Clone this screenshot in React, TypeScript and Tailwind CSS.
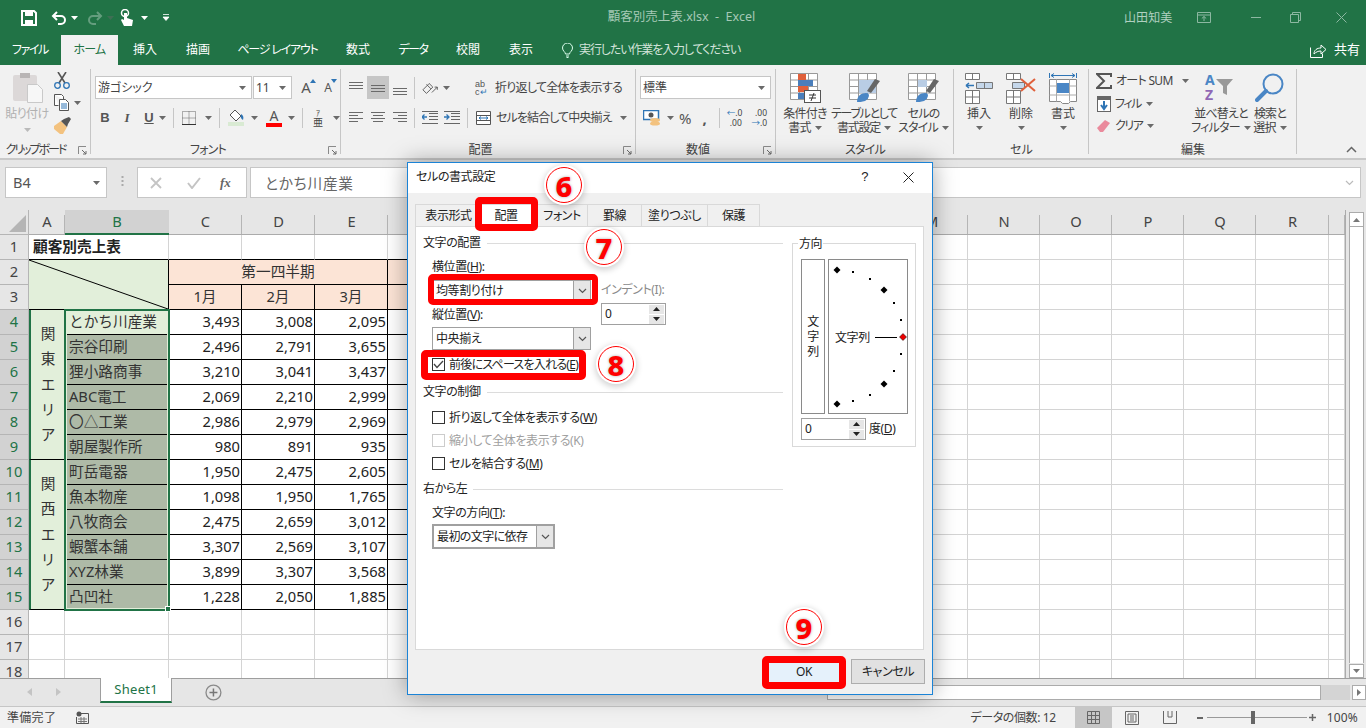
import type { ReactNode } from "react";

// カーソル類の小さい三角
function Caret({ className = "" }: { className?: string }) {
  return (
    <svg width="7" height="4" viewBox="0 0 7 4" className={className}>
      <path d="M0 0h7L3.500 4z" fill="#6a6a6a" />
    </svg>
  );
}

function Launcher() {
  return (
    <svg width="9" height="9" viewBox="0 0 9 9">
      <path d="M.5 8V.5H8" fill="none" stroke="#8a8a8a" />
      <path d="M4 4l4 4M8 5v3H5" fill="none" stroke="#6a6a6a" />
    </svg>
  );
}

function Chevron({ className = "", color = "#555" }: { className?: string; color?: string }) {
  return (
    <svg width="9" height="6" viewBox="0 0 9 6" className={className}>
      <path d="M1 1l3.500 3.500L8 1" fill="none" stroke={color} strokeWidth="1.200" />
    </svg>
  );
}

function Sep({ className = "h-[20px]" }: { className?: string }) {
  return <div className={`w-px bg-[#c6c6c6] ${className}`} />;
}

function Group({
  width,
  label,
  labelClass = "",
  launcher,
  children,
}: {
  width: string;
  label: string;
  labelClass?: string;
  launcher?: boolean;
  children: ReactNode;
}) {
  return (
    <div className={`relative flex flex-col shrink-0 ${width}`}>
      <div className="h-[77px] overflow-hidden">{children}</div>
      <div className={`flex h-[16px] items-center justify-center whitespace-nowrap text-[12px] leading-none text-[#444] ${labelClass}`}>
        {label}
      </div>
      {launcher && (
        <div className="absolute bottom-[3px] right-[4px]">
          <Launcher />
        </div>
      )}
      <div className="absolute right-0 top-[4px] h-[85px] w-px bg-[#c6c6c6]" />
    </div>
  );
}

function AlignIcon({ lines, x }: { lines: number[]; x?: number[][] }) {
  return (
    <svg width="16" height="16" viewBox="0 0 16 16">
      {lines.map((y, i) => (
        <path
          key={i}
          d={`M${x ? x[i][0] : 1} ${y + 0.5}H${x ? x[i][1] : 15}`}
          stroke="#6a6a6a"
          strokeWidth="1"
        />
      ))}
    </svg>
  );
}

function BigButton({
  icon,
  line1,
  line2,
  width,
  caret2,
}: {
  icon: ReactNode;
  line1: string;
  line2?: string;
  width: string;
  caret2?: boolean;
}) {
  return (
    <div className={`flex flex-col items-center ${width}`}>
      <div className="flex h-[33px] items-start justify-center">{icon}</div>
      <div className="mt-px h-[14px] whitespace-nowrap text-[12px] leading-[14px] text-[#444]">{line1}</div>
      <div className="flex h-[14px] items-center gap-[4px] whitespace-nowrap text-[12px] leading-[14px] text-[#444]">
        {line2}
        {caret2 && <Caret />}
      </div>
    </div>
  );
}

function ClipboardGroup() {
  return (
    <div className="flex h-full">
      <div className="flex w-[54px] flex-col items-center pt-[8px]">
        <svg width="30" height="30" viewBox="0 0 30 30" className="ml-[2px]">
          <rect x="0" y="2" width="24" height="26" rx="2" fill="#dcd8d8" />
          <rect x="7" y="0" width="10" height="5" fill="#b9b5b5" />
          <path d="M14.500 11.500h10l5 5v13h-15z" fill="#f7f7f7" stroke="#c9c9c9" />
        </svg>
        <div className="mt-[4px] text-[12px] leading-[14px] tracking-[-0.5px] text-[#b0b0b0]">貼り付け</div>
        <Caret className="mt-[7px] opacity-40" />
      </div>
      <div className="flex flex-col pt-[7px]">
        <svg width="16" height="18" viewBox="0 0 16 18">
          <path d="M4 0l7 11M12 0L5 11" stroke="#555" strokeWidth="1.600" fill="none" />
          <circle cx="3.500" cy="13.500" r="2.800" fill="none" stroke="#2f75b5" strokeWidth="1.300" />
          <circle cx="12.500" cy="13.500" r="2.800" fill="none" stroke="#2f75b5" strokeWidth="1.300" />
        </svg>
        <div className="mt-[4px] flex items-center gap-[4px]">
          <svg width="16" height="17" viewBox="0 0 16 17">
            <path d="M.5.5h7l2 2v3M.5.5v11h4" fill="#fff" stroke="#555" />
            <path d="M5.500 5.500h6l3 3v8h-9z" fill="#fff" stroke="#555" />
            <path d="M7 10h6M7 12h6M7 14h6" stroke="#2f75b5" />
          </svg>
          <Caret />
        </div>
        <svg width="17" height="17" viewBox="0 0 17 17" className="mt-[6px]">
          <path d="M0 9l7-5 6 6-4 7H6L0 12z" fill="#f3c27f" />
          <path d="M7 4l3-2 5-2 2 2-3 5-1 3z" fill="#555" />
        </svg>
      </div>
    </div>
  );
}

function FontGroup() {
  return (
    <div className="pt-[11px] pl-[4px]">
      <div className="flex h-[23px] items-center">
        <div className="flex h-[23px] w-[157px] items-center justify-between border border-[#c6c6c6] bg-white pl-[2px] pr-[5px] text-[12px] text-[#444]">
          游ゴシック
          <Caret />
        </div>
        <div className="ml-px flex h-[23px] w-[39px] items-center justify-between border border-[#c6c6c6] bg-white pl-[2px] pr-[5px] text-[12px] text-[#444]">
          11
          <Caret />
        </div>
        <div className="relative ml-[5px] w-[18px] text-center text-[15px] leading-none text-[#555]">
          A
          <svg width="6" height="4" viewBox="0 0 6 4" className="absolute right-[-1px] top-[-1px]">
            <path d="M0 4h6L3 0z" fill="#2f75b5" />
          </svg>
        </div>
        <div className="relative ml-[5px] w-[16px] text-center text-[12px] leading-none text-[#555]">
          A
          <svg width="6" height="4" viewBox="0 0 6 4" className="absolute right-[-1px] top-[-3px]">
            <path d="M0 0h6L3 4z" fill="#2f75b5" />
          </svg>
        </div>
      </div>
      <div className="mt-[9px] flex h-[20px] items-center text-[#555]">
        <div className="w-[14px] ml-[3px] text-center text-[13px] font-bold font-['Liberation_Sans']">B</div>
        <div className="ml-[8px] w-[14px] text-center text-[13px] italic font-bold font-['Liberation_Serif']">I</div>
        <div className="ml-[8px] w-[14px] text-center text-[13px] font-bold underline font-['Liberation_Sans']">U</div>
        <Caret className="ml-[3px]" />
        <Sep className="ml-[7px] h-[20px]" />
        <svg width="14" height="14" viewBox="0 0 14 14" className="ml-[8px]">
          <path d="M.5.5h13v13H.5z M7 .5v13 M.5 7h13" fill="none" stroke="#666" strokeDasharray="1 1" />
          <path d="M0 13.500h14" stroke="#333" />
        </svg>
        <Caret className="ml-[9px]" />
        <Sep className="ml-[7px] h-[20px]" />
        <div className="ml-[7px] flex w-[18px] flex-col items-center">
          <svg width="16" height="12" viewBox="0 0 16 12">
            <path d="M7 0l6 6-5 5-6-6z" fill="#fff" stroke="#555" />
            <path d="M13 4c2 1 3 3 2 6-2-1-3-3-2-6z" fill="#2f75b5" />
          </svg>
          <div className="h-[4px] w-[16px] bg-[#d9ead3]" />
        </div>
        <Caret className="ml-[6px]" />
        <div className="ml-[8px] flex w-[16px] flex-col items-center">
          <span className="text-[14px] leading-[13px] text-[#555]">A</span>
          <div className="mt-[1px] h-[4px] w-[16px] bg-[#f00]" />
        </div>
        <Caret className="ml-[6px]" />
        <Sep className="ml-[7px] h-[20px]" />
        <div className="ml-[9px] flex w-[12px] flex-col items-center text-[#444]">
          <span className="text-[8px] leading-[8px]">ｱ</span>
          <span className="text-[10px] leading-[11px]">亜</span>
        </div>
        <Caret className="ml-[9px]" />
      </div>
    </div>
  );
}

function AlignmentGroup() {
  return (
    <div className="pt-[11px] pl-[3px]">
      <div className="flex h-[23px] items-center">
        <div className="flex w-[23px] justify-center">
          <AlignIcon lines={[2, 5, 8]} />
        </div>
        <div className="flex h-[23px] w-[22px] items-center justify-center bg-[#c6c6c6]">
          <AlignIcon lines={[5, 8, 11]} />
        </div>
        <div className="flex w-[22px] justify-center">
          <AlignIcon lines={[8, 11, 14]} />
        </div>
        <Sep className="ml-[3px] h-[22px]" />
        <svg width="18" height="16" viewBox="0 0 20 16" className="ml-[7px]">
          <path d="M1 10l7-7 4 4-7 7zM5 4l5 5" fill="none" stroke="#555" />
          <path d="M11 13l6-6" stroke="#555" />
          <path d="M14 7h3v3" fill="none" stroke="#555" />
        </svg>
        <Caret className="ml-[3px]" />
        <Sep className="ml-[12px] h-[0px]" />
        <div className="ml-[12px] flex items-center">
          <div className="flex w-[20px] flex-col text-[9px] font-['Liberation_Sans'] leading-[8px] text-[#555]">
            <span>ab</span>
            <span>c<span className="text-[#2f75b5]">↵</span></span>
          </div>
          <span className="whitespace-nowrap text-[12px] tracking-[-0.7px] text-[#444]">折り返して全体を表示する</span>
        </div>
      </div>
      <div className="mt-[8px] flex h-[21px] items-center">
        <div className="flex w-[23px] justify-center">
          <AlignIcon lines={[2, 5, 8, 11]} x={[[1, 15], [1, 10], [1, 15], [1, 10]]} />
        </div>
        <div className="flex w-[22px] justify-center">
          <AlignIcon lines={[2, 5, 8, 11]} x={[[1, 15], [3, 13], [1, 15], [3, 13]]} />
        </div>
        <div className="flex w-[22px] justify-center">
          <AlignIcon lines={[2, 5, 8, 11]} x={[[1, 15], [6, 15], [1, 15], [6, 15]]} />
        </div>
        <Sep className="ml-[3px] h-[20px]" />
        <svg width="16" height="14" viewBox="0 0 16 14" className="ml-[7px]">
          <path d="M7 2.500h9M7 5.500h9M7 8.500h9M0 .5h16M0 12.500h16" stroke="#666" />
          <path d="M5 6H0M2.500 3.500L0 6l2.500 2.500" fill="none" stroke="#2f75b5" strokeWidth="1.300" />
        </svg>
        <svg width="16" height="14" viewBox="0 0 16 14" className="ml-[6px]">
          <path d="M7 2.500h9M7 5.500h9M7 8.500h9M0 .5h16M0 12.500h16" stroke="#666" />
          <path d="M0 6h5M2.500 3.500L5 6 2.500 8.500" fill="none" stroke="#2f75b5" strokeWidth="1.300" />
        </svg>
        <Sep className="ml-[7px] h-[20px]" />
        <svg width="15" height="14" viewBox="0 0 15 14" className="ml-[8px]">
          <path d="M.5.5h14v13H.5zM.5 4.500h14M.5 9.500h14" fill="#fff" stroke="#555" />
          <path d="M3 7h9M3 7l2-1.500M3 7l2 1.500M12 7l-2-1.500M12 7l-2 1.500" fill="none" stroke="#2f75b5" />
        </svg>
        <span className="ml-[5px] whitespace-nowrap text-[12px] tracking-[-0.9px] text-[#444]">セルを結合して中央揃え</span>
        <Caret className="ml-[8px]" />
      </div>
    </div>
  );
}

function NumberGroup() {
  return (
    <div className="pt-[11px] pl-[4px]">
      <div className="flex h-[23px] w-[131px] items-center justify-between border border-[#c6c6c6] bg-white pl-[2px] pr-[5px] text-[12px] text-[#444]">
        標準
        <Caret />
      </div>
      <div className="mt-[9px] flex h-[20px] items-center">
        <svg width="18" height="16" viewBox="0 0 18 16" className="ml-[3px]">
          <rect x=".5" y=".5" width="15" height="9" fill="#fff" stroke="#2f75b5" strokeWidth="1.500" />
          <circle cx="8" cy="5" r="2.500" fill="#555" />
          <ellipse cx="12" cy="10" rx="5" ry="2" fill="#f3c27f" />
          <ellipse cx="12" cy="13.500" rx="5" ry="2" fill="#f3c27f" />
        </svg>
        <Caret className="ml-[6px]" />
        <span className="ml-[5px] text-[15px] leading-none text-[#555]">%</span>
        <span className="ml-[11px] text-[15px] font-bold leading-none text-[#555]">,</span>
        <Sep className="ml-[12px] h-[20px]" />
        <div className="ml-[7px] flex flex-col gap-[2px] text-[8.500px] leading-[8px] text-[#444]">
          <span><span className="text-[#2f75b5]">←</span>.0</span>
          <span className="pl-[3px]">.00</span>
        </div>
        <div className="ml-[9px] flex flex-col gap-[2px] text-right text-[8.500px] leading-[8px] text-[#444]">
          <span>.00</span>
          <span><span className="text-[#2f75b5]">→</span>.0</span>
        </div>
      </div>
    </div>
  );
}

function StyleGroup() {
  const gridPath = "M.5.5h27v26H.5zM.5 7h27M.5 13.500h27M.5 20h27M9.500.5v26M18.500.5v26";
  return (
    <div className="flex pt-[8px]">
      <BigButton
        width="w-[58px] tracking-[-0.8px]"
        line1="条件付き"
        line2="書式"
        caret2
        icon={
          <svg width="31" height="30" viewBox="0 0 31 30">
            <path d={gridPath} fill="#fff" stroke="#999" />
            <rect x="8" y="1" width="8" height="6" fill="#e0603b" />
            <rect x="8" y="7" width="15" height="6" fill="#4a7ebb" />
            <rect x="8" y="13" width="10" height="6" fill="#e0603b" />
            <rect x="8" y="20" width="6" height="6" fill="#4a7ebb" />
            <rect x="14.500" y="17.500" width="16" height="12" fill="#fff" stroke="#555" />
            <path d="M19 22h7M19 25h7M24 20l-3 8" stroke="#333" fill="none" />
          </svg>
        }
      />
      <BigButton
        width="w-[60px] tracking-[-1.300px]"
        line1="テーブルとして"
        line2="書式設定"
        caret2
        icon={
          <svg width="31" height="30" viewBox="0 0 31 30">
            <path d={gridPath} fill="#fff" stroke="#999" />
            <rect x="10" y="7" width="17" height="13" fill="#b9cde5" />
            <path d="M31 8l-9 12-4-2 8-12z" fill="#666" />
            <path d="M8 29c0-6 4-9 9-9s3 6-1 8c-3 1-6 1-8 1z" fill="#4a86c5" />
          </svg>
        }
      />
      <BigButton
        width="w-[59px] tracking-[-0.8px]"
        line1="セルの"
        line2="スタイル"
        caret2
        icon={
          <svg width="31" height="30" viewBox="0 0 31 30">
            <path d={gridPath} fill="#fff" stroke="#999" />
            <rect x="10" y="7" width="9" height="7" fill="#b9cde5" />
            <path d="M31 8l-9 12-4-2 8-12z" fill="#666" />
            <path d="M8 29c0-6 4-9 9-9s3 6-1 8c-3 1-6 1-8 1z" fill="#4a86c5" />
          </svg>
        }
      />
    </div>
  );
}

function CellsGroup() {
  const tri = "M.5.5h14v6H.5zM7.500.5v6";
  const box = "M.5 17.500h14v13H.5zM.5 24h14M7.500 17.500v13";
  return (
    <div className="flex pl-[2px] pt-[8px]">
      <BigButton
        width="w-[46px]"
        line1="挿入"
        line2=""
        caret2
        icon={
          <svg width="28" height="31" viewBox="0 0 28 31">
            <path d={tri} fill="#fff" stroke="#777" />
            <path d={box} fill="#fff" stroke="#777" />
            <path d="M11.500 9.500h16v6h-16zM19.500 9.500v6" fill="#c5d7ea" stroke="#777" />
            <path d="M1 12.500h8M1 12.500l3-2.500M1 12.500L4 15" fill="none" stroke="#2f75b5" strokeWidth="1.500" />
          </svg>
        }
      />
      <BigButton
        width="w-[38px]"
        line1="削除"
        line2=""
        caret2
        icon={
          <svg width="30" height="31" viewBox="0 0 30 31">
            <path d={tri} fill="#fff" stroke="#777" />
            <path d={box} fill="#fff" stroke="#777" />
            <path d="M6.500 9.500h12v6h-12z" fill="#c5d7ea" stroke="#777" />
            <path d="M15 6l14 12M29 6L15 18" stroke="#e0603b" strokeWidth="2" fill="none" />
          </svg>
        }
      />
      <BigButton
        width="w-[46px]"
        line1="書式"
        line2=""
        caret2
        icon={
          <svg width="28" height="31" viewBox="0 0 28 31">
            <path d="M.5 0v5M27.500 0v5M2 2.500h24M2 2.500l3-2M2 2.500l3 2M26 2.500l-3-2M26 2.500l-3 2" fill="none" stroke="#2f75b5" />
            <path d="M.5 6.500h27v22h-6l-2 2h-6l-2-2h-11z" fill="#fff" stroke="#888" />
            <path d="M7.500 6.500v22M20.500 6.500v22M.5 13h27M.5 22h27" stroke="#aaa" />
            <rect x="8" y="10" width="12" height="10" fill="#4a86c5" />
          </svg>
        }
      />
    </div>
  );
}

function EditGroup() {
  return (
    <div className="flex pt-[5px]">
      <div className="flex w-[103px] flex-col pl-[7px] text-[12px] text-[#444]">
        <div className="flex h-[22px] items-center">
          <svg width="16" height="16" viewBox="0 0 16 16" className="shrink-0">
            <path d="M15 4V1H1l7 7-7 7h14v-3" fill="none" stroke="#555" strokeWidth="2" />
          </svg>
          <span className="ml-[4px] whitespace-nowrap tracking-[-0.7px]">オート SUM</span>
          <Caret className="ml-[9px] shrink-0" />
        </div>
        <div className="flex h-[23px] items-center">
          <svg width="15" height="16" viewBox="0 0 15 16" className="ml-px">
            <rect x=".5" y=".5" width="13" height="15" fill="#fff" stroke="#666" />
            <rect x="0" y="0" width="14" height="4" fill="#666" />
            <path d="M7 5v8M4 9l3 4 3-4" fill="none" stroke="#2f75b5" strokeWidth="2" />
          </svg>
          <span className="ml-[3px] tracking-[-1.500px]">フィル</span>
          <Caret className="ml-[5px]" />
        </div>
        <div className="flex h-[22px] items-center">
          <svg width="15" height="14" viewBox="0 0 15 14" className="ml-px">
            <path d="M0 9l8-8 5 3-7 9H3z" fill="#ea8a9c" />
          </svg>
          <span className="ml-[3px] tracking-[-1.500px]">クリア</span>
          <Caret className="ml-[5px]" />
        </div>
      </div>
      <div className="mt-[3px] flex">
        <BigButton
          width="w-[58px] tracking-[-0.8px]"
          line1="並べ替えと"
          line2="フィルター"
          caret2
          icon={
            <div className="relative flex h-[30px] w-[32px]">
              <div className="flex flex-col gap-[1px] text-[14px] font-bold leading-[14px]">
                <span className="text-[#4a86c5]">A</span>
                <span className="text-[#9068b5]">Z</span>
              </div>
              <svg width="18" height="18" viewBox="0 0 18 18" className="ml-[2px] mt-[5px]">
                <path d="M0 1h17l-6 7v9l-4-2V8z" fill="#999" />
              </svg>
            </div>
          }
        />
        <BigButton
          width="w-[32px] ml-[4px] tracking-[-0.8px]"
          line1="検索と"
          line2="選択"
          caret2
          icon={
            <svg width="30" height="30" viewBox="0 0 30 30">
              <circle cx="18" cy="11" r="9.500" fill="none" stroke="#4a86c5" strokeWidth="2" />
              <path d="M11 18L2 27" stroke="#4a86c5" strokeWidth="4" strokeLinecap="round" />
            </svg>
          }
        />
      </div>
    </div>
  );
}

function Ribbon() {
  return (
    <div className="relative flex h-[93px] shrink-0 bg-[#f1f1f1] text-[#444]">
      <Group width="w-[91px]" label="クリップボード" labelClass="pr-[20px] tracking-[-2px]" launcher>
        <ClipboardGroup />
      </Group>
      <Group width="w-[250px]" label="フォント" labelClass="pr-[16px] tracking-[-0.8px]" launcher>
        <FontGroup />
      </Group>
      <Group width="w-[295px]" label="配置" labelClass="pr-[16px]" launcher>
        <AlignmentGroup />
      </Group>
      <Group width="w-[140px]" label="数値" labelClass="pr-[16px]" launcher>
        <NumberGroup />
      </Group>
      <Group width="w-[178px]" label="スタイル" labelClass="tracking-[-0.8px]">
        <StyleGroup />
      </Group>
      <Group width="w-[135px]" label="セル">
        <CellsGroup />
      </Group>
      <Group width="w-[208px]" label="編集">
        <EditGroup />
      </Group>
      <svg width="11" height="7" viewBox="0 0 11 7" className="absolute bottom-[5px] right-[9px]">
        <path d="M1 6l4.500-4.500L10 6" fill="none" stroke="#666" strokeWidth="1.500" />
      </svg>
    </div>
  );
}

function TitleBar() {
  return (
    <div className="flex h-[35px] shrink-0 items-center bg-[#217346] text-white">
      <svg width="16" height="16" viewBox="0 0 16 16" className="ml-[21px]">
        <path d="M1 1h12l2 2v12H1z" fill="none" stroke="#fff" strokeWidth="2" />
        <rect x="4" y="1" width="8" height="5" fill="#fff" />
        <rect x="4" y="10" width="8" height="5" fill="#fff" />
      </svg>
      <svg width="16" height="14" viewBox="0 0 16 14" className="ml-[14px]">
        <path d="M3 5h7a4 4 0 010 8H7M6 1L2 5l4 4" fill="none" stroke="#fff" strokeWidth="2" />
      </svg>
      <Caret className="ml-[4px] brightness-[3]" />
      <svg width="16" height="14" viewBox="0 0 16 14" className="ml-[9px] opacity-30">
        <path d="M13 5H6a4 4 0 000 8h3M10 1l4 4-4 4" fill="none" stroke="#fff" strokeWidth="2" />
      </svg>
      <Caret className="ml-[4px] opacity-40" />
      <svg width="14" height="18" viewBox="0 0 14 18" className="ml-[6px]">
        <circle cx="5" cy="4" r="3.500" fill="none" stroke="#fff" strokeWidth="1.500" />
        <path d="M4 4v7L2 10l-1 1 3 6h8l1-6-6-2V4z" fill="#fff" />
      </svg>
      <Caret className="ml-[7px] brightness-[3]" />
      <svg width="8" height="7" viewBox="0 0 8 7" className="ml-[14px]">
        <path d="M1 .5h6M1 3h6L4 6.500z" fill="#fff" stroke="#fff" strokeWidth=".8" />
      </svg>
      <div className="flex flex-1 justify-center">
        <span className="ml-[69px] whitespace-nowrap text-[12.500px] text-[#a6c9b6]">顧客別売上表.xlsx&nbsp; -&nbsp; Excel</span>
      </div>
      <span className="w-[48px] whitespace-nowrap text-[12px] tracking-[0.1px] text-[#b0d0c0]">山田知美</span>
      <svg width="14" height="11" viewBox="0 0 14 11" className="ml-[25px]">
        <path d="M.5.5h13v10H.5zM.5 3h13M7 9V4.500M4.800 6.500L7 4.500l2.200 2" fill="none" stroke="#8db8a2" />
      </svg>
      <div className="ml-[40px] h-px w-[10px] bg-[#8db8a2]" />
      <svg width="11" height="11" viewBox="0 0 11 11" className="ml-[29px]">
        <path d="M.5 2.500h8v8h-8zM2.500 2.500v-2h8v8h-2" fill="none" stroke="#8db8a2" />
      </svg>
      <svg width="11" height="11" viewBox="0 0 11 11" className="ml-[35px] mr-[19px]">
        <path d="M.5.5l10 10M10.500.5l-10 10" stroke="#8db8a2" />
      </svg>
    </div>
  );
}

function TabBar() {
  const tabs = [
    ["挿入", "w-[54px]"],
    ["描画", "w-[52px]"],
    ["ページ レイアウト", "w-[107px] tracking-[-1.200px]"],
    ["数式", "w-[54px]"],
    ["データ", "w-[56px] tracking-[-1.500px]"],
    ["校閲", "w-[54px]"],
    ["表示", "w-[52px]"],
  ];
  return (
    <div className="flex h-[30px] shrink-0 items-center bg-[#217346] text-[12px] text-white">
      <div className="w-[61px] pl-[12px] tracking-[-1.400px]">ファイル</div>
      <div className="flex h-full w-[57px] items-center justify-center bg-[#f1f1f1] tracking-[-0.8px] text-[#217346]">ホーム</div>
      {tabs.map(([name, w]) => (
        <div key={name} className={`text-center ${w}`}>
          {name}
        </div>
      ))}
      <svg width="11" height="15" viewBox="0 0 11 15" className="ml-[15px]">
        <path d="M3.500 11c0-2-3-3-3-6a5 5 0 0110 0c0 3-3 4-3 6zM4 13h3M4.500 14.500h2" fill="none" stroke="#dfe" />
      </svg>
      <span className="ml-[6px] whitespace-nowrap tracking-[-1.100px] text-[#d3e3da]">実行したい作業を入力してください</span>
      <div className="flex flex-1 items-center justify-end pr-[6px]">
        <svg width="16" height="15" viewBox="0 0 16 15">
          <path d="M.5 4.500v10h12v-4" fill="none" stroke="#fff" />
          <path d="M4 11c0-4 3-6 7-6V2l5 4.500L11 11V8c-3 0-5 1-7 3z" fill="none" stroke="#fff" />
        </svg>
        <span className="ml-[8px] text-[13px]">共有</span>
      </div>
    </div>
  );
}

function FormulaBar() {
  return (
    <div className="flex h-[52px] shrink-0 border-t-2 border-[#c9c9c9] bg-[#e6e6e6] pl-[5px] pr-[5px] pt-[7px]">
      <div className="flex h-[31px] w-[102px] items-center justify-between border border-[#c6c6c6] bg-white pl-[7px] pr-[6px] text-[14.500px] text-[#555]">
        B4
        <Caret />
      </div>
      <div className="flex w-[30px] justify-center pt-[8px]">
        <svg width="3" height="12" viewBox="0 0 3 12">
          <path d="M1.500 1v2M1.500 5v2M1.500 9v2" stroke="#aaa" strokeWidth="2" />
        </svg>
      </div>
      <div className="flex h-[31px] w-[110px] items-center border border-[#c6c6c6] bg-white">
        <svg width="12" height="12" viewBox="0 0 12 12" className="ml-[12px]">
          <path d="M1 1l10 10M11 1L1 11" stroke="#c4c4c4" strokeWidth="1.800" />
        </svg>
        <svg width="14" height="12" viewBox="0 0 14 12" className="ml-[25px]">
          <path d="M1 6l4 5 8-10" fill="none" stroke="#c4c4c4" strokeWidth="2" />
        </svg>
        <span className="ml-[19px] font-['Liberation_Serif'] text-[13px] font-bold italic text-[#666]">fx</span>
      </div>
      <div className="ml-[3px] flex h-[31px] flex-1 items-center justify-between border border-[#c6c6c6] bg-white pl-[14px] pr-[6px] text-[14.670px] tracking-[0.8px] text-[#666]">
        とかち川産業
        <Chevron color="#bbb" />
      </div>
    </div>
  );
}

const rows: [string, string, string, string][] = [
  ["とかち川産業", "3,493", "3,008", "2,095"],
  ["宗谷印刷", "2,496", "2,791", "3,655"],
  ["狸小路商事", "3,210", "3,041", "3,437"],
  ["ABC電工", "2,069", "2,210", "2,999"],
  ["〇△工業", "2,986", "2,979", "2,969"],
  ["朝屋製作所", "980", "891", "935"],
  ["町岳電器", "1,950", "2,475", "2,605"],
  ["魚本物産", "1,098", "1,950", "1,765"],
  ["八牧商会", "2,475", "2,659", "3,012"],
  ["蝦蟹本舗", "3,307", "2,569", "3,107"],
  ["XYZ林業", "3,899", "3,307", "3,568"],
  ["凸凹社", "1,228", "2,050", "1,885"],
];

// F〜L はダイアログの下に隠れる
const columns = ["A", "B", "C", "D", "E", "", "", "", "", "", "", "", "M", "N", "O", "P", "Q", "R", ""];

function RowHead({ n }: { n: number }) {
  const active = n >= 4 && n <= 15;
  return (
    <div
      className={`flex items-center justify-center border-b border-r border-[#b5b5b5] pb-[2px] ${
        active ? "bg-[#d2d2d2] text-[#217346]" : "bg-[#e6e6e6] text-[#444]"
      }`}
    >
      {n}
    </div>
  );
}

function Blanks() {
  return (
    <>
      {Array.from({ length: 13 }).map((_, i) => (
        <div key={i} className="border-b border-r border-[#d4d4d4] bg-white" />
      ))}
    </>
  );
}

function Vertical({ text }: { text: string }) {
  return (
    <div className="flex flex-col items-center justify-center border-b border-l-2 border-black border-l-[#217346] bg-[#e2efda] pb-[2px] text-[#333]">
      {text.split("").map((c, i) => (
        <span key={i} className="flex h-[25.200px] items-center">
          {c}
        </span>
      ))}
    </div>
  );
}

function Sheet() {
  return (
    <div className="relative grid h-[468px] w-[1346px] shrink-0 grid-cols-[29px_36px_104px_73px_73px_73px_repeat(8,72.500px)_72px_72px_72px_72px_73px_16px] grid-rows-[25px_repeat(18,25px)] overflow-hidden border-r border-[#ababab] text-[14.670px] text-[#222] [font-feature-settings:normal]">
      <div className="flex items-end justify-end border-b border-r border-[#b5b5b5] bg-[#e6e6e6] p-[2px]">
        <svg width="17" height="17" viewBox="0 0 17 17">
          <path d="M17 0v17H0z" fill="#b5b5b5" />
        </svg>
      </div>
      {columns.map((c, i) => (
        <div
          key={i}
          className={`relative flex items-center justify-center pb-[2px] ${
            c === "B"
              ? "border-b-2 border-[#217346] bg-[#d2d2d2] text-[#217346]"
              : "border-b border-[#ababab] bg-[#e6e6e6] text-[#444]"
          }`}
        >
          {c}
          {c !== "B" && <div className="absolute bottom-0 right-0 h-[19px] w-px bg-[#b5b5b5]" />}
        </div>
      ))}

      <RowHead n={1} />
      <div className="col-span-2 flex items-center border-b border-r border-b-black border-r-[#d4d4d4] pb-[2px] pl-[4px] font-bold">
        顧客別売上表
      </div>
      {[0, 1, 2, 3].map((i) => (
        <div key={i} className="border-b border-r border-b-black border-r-[#d4d4d4]" />
      ))}
      <Blanks />

      <RowHead n={2} />
      <div className="relative col-span-2 row-span-2 border-b border-r border-black bg-[#e2efda]">
        <svg className="absolute inset-0 h-full w-full" viewBox="0 0 140 49" preserveAspectRatio="none">
          <path d="M0 0L140 49" stroke="#000" strokeWidth="1" />
        </svg>
      </div>
      <div className="col-span-3 flex items-center justify-center border-b border-r border-black bg-[#fce4d6] pb-[2px] text-[#333]">
        第一四半期
      </div>
      <div className="border-b border-r border-black bg-[#fce4d6]" />
      <Blanks />

      <RowHead n={3} />
      {["1月", "2月", "3月"].map((m) => (
        <div key={m} className="flex items-center justify-center border-b border-r border-black bg-[#fce4d6] pb-[2px] text-[#333]">
          {m}
        </div>
      ))}
      <div className="border-b border-r border-black bg-[#fce4d6]" />
      <Blanks />

      {rows.map((r, i) => (
        <div key={r[0]} className="contents">
          <RowHead n={i + 4} />
          {i === 0 && (
            <div className="row-span-6 grid">
              <Vertical text="関東エリア" />
            </div>
          )}
          {i === 6 && (
            <div className="row-span-6 grid">
              <Vertical text="関西エリア" />
            </div>
          )}
          <div
            className={`flex items-center overflow-hidden whitespace-nowrap border-b border-black pb-[2px] pl-[4px] text-[#333] ${
              i === 0 ? "bg-[#e2efda]" : "bg-[#aebaa7]"
            }`}
          >
            {r[0]}
          </div>
          {r.slice(1).map((v, j) => (
            <div key={j} className="flex items-center justify-end border-b border-r border-black bg-white pb-[2px] pr-[1px]">
              {v}
            </div>
          ))}
          <div className="border-b border-r border-black bg-white" />
          <Blanks />
        </div>
      ))}

      {[16, 17, 18].map((n) => (
        <div key={n} className="contents">
          <RowHead n={n} />
          <div className="border-b border-r border-[#d4d4d4]" />
          <div className="border-b border-r border-[#d4d4d4]" />
          {[0, 1, 2, 3].map((i) => (
            <div key={i} className="border-b border-r border-[#d4d4d4]" />
          ))}
          <Blanks />
        </div>
      ))}

      {/* 選択範囲の枠 */}
      <div className="pointer-events-none absolute -inset-x-[1px] -inset-y-px col-start-3 col-end-4 row-start-5 row-end-17 border-2 border-[#217346] shadow-[inset_0_0_0_1px_#e2efda]">
        <div className="absolute -bottom-[3px] -right-[3px] h-[6px] w-[6px] border border-white bg-[#217346]" />
      </div>
    </div>
  );
}

function VScroll() {
  return (
    <div className="flex w-[20px] shrink-0 flex-col items-center bg-[#e6e6e6] pt-[2px]">
      <div className="flex h-[15px] w-[15px] items-center justify-center border border-[#ababab] bg-white">
        <svg width="7" height="4" viewBox="0 0 7 4">
          <path d="M0 4h7L3.500 0z" fill="#777" />
        </svg>
      </div>
      <div className="w-[15px] flex-1 border-x border-[#ababab] bg-white" />
      <div className="h-[1px] w-[15px] bg-[#e6e6e6]" />
      <div className="flex h-[14px] w-[15px] items-center justify-center border border-[#ababab] bg-white">
        <svg width="7" height="4" viewBox="0 0 7 4">
          <path d="M0 0h7L3.500 4z" fill="#777" />
        </svg>
      </div>
    </div>
  );
}

function SheetTabs() {
  return (
    <div className="flex h-[29px] shrink-0 border-b border-t border-b-[#c6c6c6] border-t-[#9e9e9e] bg-[#e6e6e6]">
      <svg width="5" height="8" viewBox="0 0 5 8" className="ml-[27px] mt-[9px]">
        <path d="M5 0v8L0 4z" fill="#c4c4c4" />
      </svg>
      <svg width="5" height="8" viewBox="0 0 5 8" className="ml-[24px] mt-[9px]">
        <path d="M0 0v8l5-4z" fill="#c4c4c4" />
      </svg>
      <div className="-mt-px ml-[39px] flex h-[25px] w-[73px] items-center justify-center border-x border-b-2 border-x-[#9e9e9e] border-b-[#217346] bg-white text-[13px] tracking-[0.3px] text-[#217346]">
        Sheet1
      </div>
      <svg width="17" height="17" viewBox="0 0 17 17" className="ml-[33px] mt-[5px]">
        <circle cx="8.500" cy="8.500" r="7.500" fill="none" stroke="#8a8a8a" strokeWidth="1.300" />
        <path d="M8.500 4.500v8M4.500 8.500h8" stroke="#777" strokeWidth="1.500" />
      </svg>
      <div className="ml-[605px] mt-[6px] h-[15px] w-[497px] border border-[#ababab] bg-white" />
      <div className="mt-[6px] h-[15px] w-[29px] bg-[#d4d4d4]" />
      <div className="ml-[2px] mt-[6px] flex h-[15px] w-[14px] items-center justify-center border border-[#ababab] bg-white">
        <svg width="4" height="7" viewBox="0 0 4 7">
          <path d="M0 0v7l4-3.500z" fill="#777" />
        </svg>
      </div>
    </div>
  );
}

function StatusBar() {
  return (
    <div className="flex h-[21px] shrink-0 items-center bg-[#f1f1f1] text-[12px] text-[#444]">
      <span className="ml-[7px] tracking-[0.3px]">準備完了</span>
      <svg width="13" height="13" viewBox="0 0 13 13" className="ml-[20px]">
        <circle cx="3" cy="3" r="2.500" fill="#555" />
        <path d="M5 2.500h7.500v10H.5V6" fill="none" stroke="#555" />
        <path d="M2 8h9M2 10.500h9M5 6v6M8 6v6" stroke="#777" />
      </svg>
      <span className="ml-auto whitespace-nowrap tracking-[-0.4px]">データの個数: 12</span>
      <div className="ml-[19px] flex h-full w-[37px] items-center justify-center bg-[#c6c6c6]">
        <svg width="13" height="13" viewBox="0 0 13 13">
          <path d="M.5.5h12v12H.5zM4.500.5v12M8.500.5v12M.5 4.500h12M.5 8.500h12" fill="none" stroke="#666" />
        </svg>
      </div>
      <svg width="14" height="14" viewBox="0 0 14 14" className="ml-[13px]">
        <path d="M.5.5h13v13H.5z" fill="none" stroke="#666" />
        <path d="M3 3h8v8H3zM5 5h4M5 7h4M5 9h4" fill="none" stroke="#666" />
      </svg>
      <svg width="14" height="13" viewBox="0 0 14 13" className="ml-[24px]">
        <path d="M.5 0v12.500h13V0M5 0v6h4V0" fill="none" stroke="#666" />
      </svg>
      <span className="ml-[20px] h-[2px] w-[6px] bg-[#666]" />
      <div className="relative ml-[4px] h-px w-[100px] bg-[#999]">
        <div className="absolute -top-[6px] left-[44px] h-[13px] w-[4px] bg-[#666]" />
      </div>
      <svg width="7" height="7" viewBox="0 0 7 7" className="ml-[2px]">
        <path d="M3.500 0v7M0 3.500h7" stroke="#666" strokeWidth="1.500" />
      </svg>
      <span className="ml-[11px] mr-[8px] whitespace-nowrap tracking-[0.2px]">100%</span>
    </div>
  );
}

function Spin({ value, className }: { value: string; className: string }) {
  return (
    <div className={`flex items-center justify-between border border-[#a0a0a0] bg-white pl-[3px] pr-px ${className}`}>
      <span>{value}</span>
      <div className="flex flex-col gap-px">
        {[0, 1].map((i) => (
          <div key={i} className="flex h-[9px] w-[15px] items-center justify-center bg-[#e6e6e6]">
            <svg width="7" height="4" viewBox="0 0 7 4">
              <path d={i === 0 ? "M0 4h7L3.500 0z" : "M0 0h7L3.500 4z"} fill="#222" />
            </svg>
          </div>
        ))}
      </div>
    </div>
  );
}

function Combo({ value, className }: { value: string; className: string }) {
  return (
    <div className={`flex items-stretch border border-[#a0a0a0] bg-white ${className}`}>
      <span className="flex flex-1 items-center pl-[3px] whitespace-nowrap">{value}</span>
      <span className="flex w-[17px] items-center justify-center border-l border-[#a0a0a0] bg-[#e6e6e6]">
        <Chevron />
      </span>
    </div>
  );
}

function Legend({ text, className = "" }: { text: string; className?: string }) {
  return (
    <div className={`flex h-[20px] items-center gap-[6px] ${className}`}>
      <span className="whitespace-nowrap">{text}</span>
      <div className="h-px flex-1 bg-[#dcdcdc]" />
    </div>
  );
}

function Check({ label, under, disabled, checked, tight }: { label: string; under: string; disabled?: boolean; checked?: boolean; tight?: boolean }) {
  return (
    <div className={`flex h-[13px] items-center gap-[4px] whitespace-nowrap ${disabled ? "text-[#a0a0a0]" : ""}`}>
      <div className={`flex h-[13px] w-[13px] shrink-0 items-center justify-center border ${disabled ? "border-[#ccc]" : "border-[#333]"} bg-white`}>
        {checked && (
          <svg width="11" height="9" viewBox="0 0 11 9">
            <path d="M1 4l3 3.500L10 1" fill="none" stroke="#444" strokeWidth="1.300" />
          </svg>
        )}
      </div>
      <span className={tight ? "tracking-[-0.75px]" : ""}>
        {label}(<span className={disabled ? "" : "underline"}>{under}</span>)
      </span>
    </div>
  );
}

function Fan() {
  const big = [[8, 10], [55, 30], [55, 124], [8, 144]];
  const small = [[24, 12], [41, 19], [65, 43], [72, 60], [72, 94], [65, 111], [41, 135], [24, 141]];
  return (
    <svg className="absolute inset-0" width="80" height="155" viewBox="0 0 80 155">
      {big.map(([x, y]) => (
        <path key={`${x}-${y}`} d={`M${x} ${y - 3.5}l3.500 3.500-3.500 3.500-3.500-3.500z`} fill="#000" />
      ))}
      {small.map(([x, y]) => (
        <rect key={`${x}-${y}`} x={x - 1} y={y - 1} width="2" height="2" fill="#000" />
      ))}
      <path d="M46 77.500h22" stroke="#000" />
      <path d="M74 73.500l3.500 3.500-3.500 3.500-3.500-3.500z" fill="#e00" stroke="#000" strokeWidth=".5" />
    </svg>
  );
}

function Dialog() {
  const tabs = [
    ["表示形式", "w-[61px] h-[22px] pl-[6px]"],
    ["配置", "w-[61px] h-[23px] bg-white"],
    ["フォント", "w-[51px] h-[22px]"],
    ["罫線", "w-[54px] h-[22px]"],
    ["塗りつぶし", "w-[66px] h-[22px]"],
    ["保護", "w-[52px] h-[22px]"],
  ];
  return (
    <div className="absolute left-[407px] top-[162px] h-[533px] w-[526px] border border-[#1b83d6] bg-[#f0f0f0] text-[12px] tracking-[-0.4px] text-[#222] shadow-[0_0_22px_rgba(0,0,0,0.35)]">
      <div className="flex h-[30px] items-center bg-white pl-[8px]">
        <span className="-mt-[2px]">セルの書式設定</span>
        <span className="ml-auto -mt-[2px] text-[13px] font-['Liberation_Sans']">?</span>
        <svg width="11" height="11" viewBox="0 0 11 11" className="ml-[35px] mr-[18px] -mt-[2px]">
          <path d="M.5.5l10 10M10.500.5l-10 10" stroke="#222" />
        </svg>
      </div>
      <div className="ml-[7px] mt-[11px] flex h-[22px]">
        {tabs.map(([t, c]) => (
          <div key={t} className={`flex items-center justify-center border-r border-t border-[#d9d9d9] first:border-l ${c}`}>
            {t}
          </div>
        ))}
      </div>
      <div className="ml-[7px] flex h-[424px] w-[509px] border border-[#d9d9d9] bg-white">
        <div className="ml-[7px] w-[360px] pt-[6px]">
          <Legend text="文字の配置" />
          <div className="flex pl-[9px]">
            <div className="w-[159px]">
              <div className="mt-[6px] flex h-[16px] items-center">横位置(<span className="underline">H</span>):</div>
              <Combo value="均等割り付け" className="mt-[5px] h-[22px]" />
              <div className="mt-[5px] flex h-[16px] items-center">縦位置(<span className="underline">V</span>):</div>
              <Combo value="中央揃え" className="mt-[4px] h-[23px]" />
            </div>
            <div className="ml-[10px]">
              <div className="mt-[29px] flex h-[16px] items-center whitespace-nowrap text-[#8a8a8a]">インデント(I):</div>
              <Spin value="0" className="mt-[5px] h-[22px] w-[65px]" />
            </div>
          </div>
          <div className="mt-[8px] pl-[9px]">
            <Check label="前後にスペースを入れる" under="E" checked tight />
          </div>
          <Legend text="文字の制御" className="mt-[11px]" />
          <div className="mt-[4px] flex flex-col pl-[9px]">
            <div className="flex h-[23px] items-center"><Check label="折り返して全体を表示する" under="W" /></div>
            <div className="flex h-[23px] items-center"><Check label="縮小して全体を表示する" under="K" disabled /></div>
            <div className="flex h-[23px] items-center"><Check label="セルを結合する" under="M" /></div>
          </div>
          <Legend text="右から左" className="mt-[4px]" />
          <div className="pl-[9px]">
            <div className="mt-[6px] flex h-[16px] items-center">文字の方向(<span className="underline">T</span>):</div>
            <Combo value="最初の文字に依存" className="mt-[3px] h-[25px] w-[123px] border-2 tracking-[-0.6px]" />
          </div>
        </div>
        <div className="relative ml-[9px] mt-[16px] h-[204px] w-[124px] border border-[#d9d9d9]">
          <span className="absolute -top-[9px] left-[5px] bg-white px-px">方向</span>
          <div className="ml-[8px] mt-[15px] flex gap-[3px]">
            <div className="flex h-[155px] w-[24px] flex-col items-center justify-center border border-[#8a8a8a] leading-[15px]">
              <span>文</span>
              <span>字</span>
              <span>列</span>
            </div>
            <div className="relative flex h-[155px] w-[80px] items-center border border-[#8a8a8a] pl-[6px] pt-[3px]">
              <Fan />
              <span>文字列</span>
            </div>
          </div>
          <div className="ml-[8px] mt-[4px] flex items-center">
            <Spin value="0" className="h-[22px] w-[65px]" />
            <span className="ml-[3px] whitespace-nowrap">度(<span className="underline">D</span>)</span>
          </div>
        </div>
      </div>
      <div className="mt-[9px] flex gap-[10px] pl-[359px]">
        <div className="flex h-[25px] w-[74px] items-center justify-center border border-[#0078d7] bg-[#e5f1fb]">OK</div>
        <div className="flex h-[25px] w-[74px] items-center justify-center border border-[#adadad] bg-[#e1e1e1]">キャンセル</div>
      </div>
    </div>
  );
}

// 赤枠と丸数字の注釈
function Callout({ n, className }: { n: string; className: string }) {
  return (
    <div
      className={`absolute flex h-[36px] w-[36px] items-center justify-center rounded-full border border-[#f00] bg-white text-[29px] font-extrabold leading-none text-[#f00] shadow-[0_0_0_2px_#fff,0_2px_6px_3px_rgba(0,0,0,0.18)] [text-shadow:0_0_3px_#aaa] ${className}`}
    >
      {n}
    </div>
  );
}

export default function App() {
  return (
    <div className="relative flex h-[728px] w-[1366px] flex-col overflow-hidden bg-white [font-family:'Noto_Sans','Noto_Sans_CJK_JP',sans-serif] [font-feature-settings:'palt']">
      <TitleBar />
      <TabBar />
      <Ribbon />
      <FormulaBar />
      <div className="flex h-[468px] shrink-0">
        <Sheet />
        <VScroll />
      </div>
      <SheetTabs />
      <StatusBar />

      <Dialog />

      <div className="absolute left-[475px] top-[197px] h-[34px] w-[63px] rounded-[5px] border-[7px] border-[#f00]" />
      <div className="absolute left-[428px] top-[274px] h-[31px] w-[170px] rounded-[5px] border-[6px] border-[#f00]" />
      <div className="absolute left-[421px] top-[350px] h-[30px] w-[165px] rounded-[5px] border-[7px] border-[#f00]" />
      <div className="absolute left-[762px] top-[656px] h-[33px] w-[84px] rounded-[5px] border-[7px] border-[#f00]" />

      <Callout n="6" className="left-[546px] top-[167px]" />
      <Callout n="7" className="left-[586px] top-[229px]" />
      <Callout n="8" className="left-[598px] top-[346px]" />
      <Callout n="9" className="left-[786px] top-[609px]" />
    </div>
  );
}
